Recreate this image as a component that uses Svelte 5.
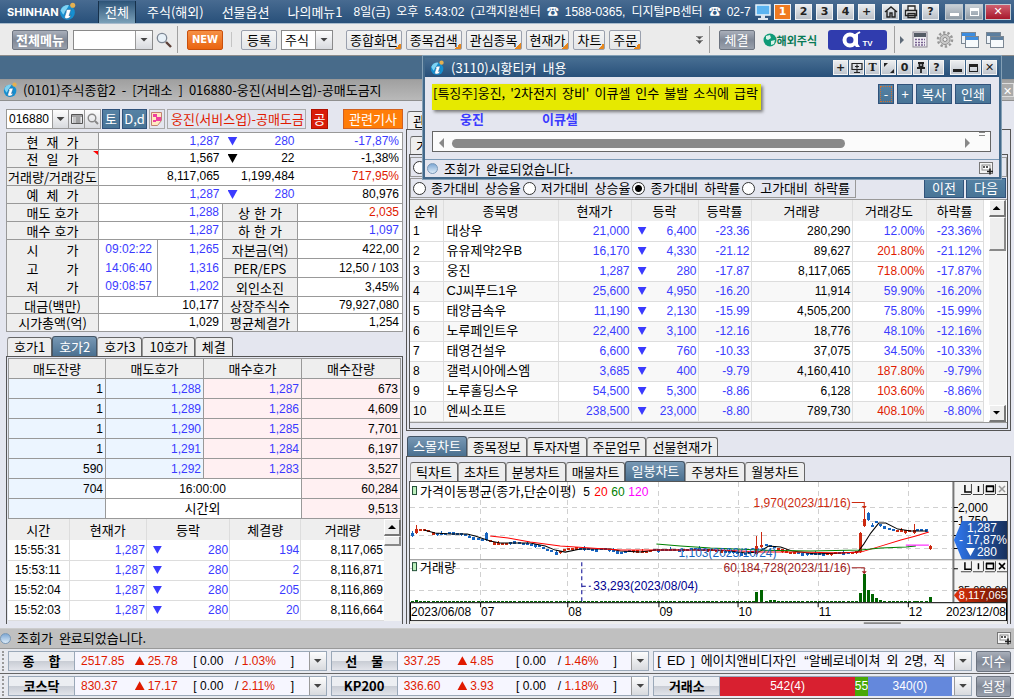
<script lang="ts">
	type Dir = 'up' | 'down' | 'none';

	const menus = ['주식(해외)', '선물옵션', '나의메뉴1'];
	const quickMenus = ['종합화면', '종목검색', '관심종목', '현재가', '차트', '주문'];
	const screens = ['1', '2', '3', '4', '+'];

	let code = $state('016880');
	let market = $state('주식');
	let search = $state('');
	let basis = $state(2);

	const basisOptions = ['종가대비 상승율', '저가대비 상승율', '종가대비 하락률', '고가대비 하락률'];

	const summary = [
		{ label: '현 재 가', value: '1,287', diff: '280', rate: '-17,87%', color: 'blue', rateColor: 'blue' },
		{ label: '전 일 가', value: '1,567', diff: '22', rate: '-1,38%', color: '', rateColor: '', mark: true },
		{ label: '거래량/거래강도', value: '8,117,065', diff: '1,199,484', rate: '717,95%', color: '', rateColor: 'red', plain: true },
		{ label: '예 체 가', value: '1,287', diff: '280', rate: '80,976', color: 'blue', rateColor: '' }
	];

	const details = [
		{ label: '매도 호가', time: '', value: '1,288', color: 'blue', label2: '상 한 가', value2: '2,035', color2: 'red' },
		{ label: '매수 호가', time: '', value: '1,287', color: 'blue', label2: '하 한 가', value2: '1,097', color2: 'blue' },
		{ label: '시 가', time: '09:02:22', value: '1,265', color: 'blue', label2: '자본금(억)', value2: '422,00', color2: '' },
		{ label: '고 가', time: '14:06:40', value: '1,316', color: 'blue', label2: 'PER/EPS', value2: '12,50 / 103', color2: '' },
		{ label: '저 가', time: '09:08:57', value: '1,202', color: 'blue', label2: '외인소진', value2: '3,45%', color2: '' },
		{ label: '대금(백만)', time: '', value: '10,177', color: '', label2: '상장주식수', value2: '79,927,080', color2: '' },
		{ label: '시가총액(억)', time: '', value: '1,029', color: '', label2: '평균체결가', value2: '1,254', color2: '' }
	];

	const quoteTabs = ['호가1', '호가2', '호가3', '10호가', '체결'];
	const quotes = [
		['1', '1,288', '1,287', '673'],
		['1', '1,289', '1,286', '4,609'],
		['1', '1,290', '1,285', '7,701'],
		['1', '1,291', '1,284', '6,197'],
		['590', '1,292', '1,283', '3,527']
	];

	const trades = [
		['15:55:31', '1,287', '280', '194', '8,117,065'],
		['15:53:11', '1,287', '280', '2', '8,116,871'],
		['15:52:04', '1,287', '280', '205', '8,116,869'],
		['15:52:03', '1,287', '280', '20', '8,116,664']
	];

	const rankHeads = ['순위', '종목명', '현재가', '등락', '등락률', '거래량', '거래강도', '하락률'];
	const ranks = [
		['대상우', '21,000', '6,400', '-23.36', '280,290', '12.00%'],
		['유유제약2우B', '16,170', '4,330', '-21.12', '89,627', '201.80%'],
		['웅진', '1,287', '280', '-17.87', '8,117,065', '718.00%'],
		['CJ씨푸드1우', '25,600', '4,950', '-16.20', '11,914', '59.90%'],
		['태양금속우', '11,190', '2,130', '-15.99', '4,505,200', '75.80%'],
		['노루페인트우', '22,400', '3,100', '-12.16', '18,776', '48.10%'],
		['태영건설우', '6,600', '760', '-10.33', '37,075', '34.50%'],
		['갤럭시아에스엠', '3,685', '400', '-9.79', '4,160,410', '187.80%'],
		['노루홀딩스우', '54,500', '5,300', '-8.86', '6,128', '103.60%'],
		['엔씨소프트', '238,500', '23,000', '-8.80', '789,730', '408.10%']
	];

	const boardTabs = ['스몰차트', '종목정보', '투자자별', '주문업무', '선물현재가'];
	const chartTabs = ['틱차트', '초차트', '분봉차트', '매물차트', '일봉차트', '주봉차트', '월봉차트'];

	const indices = [
		[
			{ name: ['종', '합'], value: '2517.85', diff: '25.78', rate: '1.03%' },
			{ name: ['선', '물'], value: '337.25', diff: '4.85', rate: '1.46%' }
		],
		[
			{ name: ['코스닥'], value: '830.37', diff: '17.17', rate: '2.11%' },
			{ name: ['KP200'], value: '336.60', diff: '3.93', rate: '1.18%' }
		]
	];

	// daily price track, x and y in chart units
	const track = [
		[2, 52], [6, 50], [11, 47], [15, 48], [22, 51], [30, 52], [42, 51], [55, 53], [65, 57], [72, 58],
		[80, 59], [88, 62], [96, 62], [105, 60], [115, 62], [130, 64], [140, 69], [148, 71], [155, 68],
		[165, 66], [175, 67], [185, 68], [193, 66], [202, 69], [210, 71], [220, 69], [235, 70], [245, 68],
		[270, 68], [287, 67], [295, 68], [320, 70], [330, 72], [340, 71], [352, 63], [362, 64], [370, 68],
		[380, 71], [400, 72], [440, 71], [446, 70], [464, 39], [468, 42], [475, 46], [485, 49], [495, 49], [505, 48], [516, 48]
	];

	// candle index: up flag, x, wick top, body top, body bottom
	const special: Record<number, number[]> = {
		1: [1, 6, 43, 47, 51],
		18: [0, 76, 50, 51, 58],
		84: [1, 345, 54, 64, 72],
		85: [1, 350, 50, 63, 65],
		109: [1, 449, 50, 51, 70],
		110: [1, 453, 27, 37, 44],
		111: [0, 457, 30, 31, 38],
		122: [1, 503, 42, 48, 51],
		126: [1, 519, 63, 64, 67]
	};

	function trackAt(x: number) {
		for (let i = 1; i < track.length; i++) {
			const [x0, y0] = track[i - 1];
			const [x1, y1] = track[i];
			if (x <= x1) return y0 + ((y1 - y0) * (x - x0)) / (x1 - x0);
		}
		return track[track.length - 1][1];
	}

	const candles = Array.from({ length: 127 }, (_, i) => {
		const x = Math.round(2 + i * 4.1);
		const s = special[i];
		if (s) return { x: s[1], top: s[2], low: s[4] + 1, y: s[3], h: s[4] - s[3], up: s[0] > 0 };
		const wave = Math.sin(i * 0.7) + Math.sin(i * 0.37);
		const y = Math.round(trackAt(x)) - 1;
		const h = 2 + (i % 5 === 0 ? 1 : 0);
		return { x, top: y - (i % 7 === 0 ? 2 : 0), low: y + h + (i % 6 === 0 ? 1 : 0), y, h, up: wave > 0.4 };
	});

	const volumes: Record<number, number> = {
		1: 2, 84: 10, 85: 12, 87: 2, 88: 2, 109: 9, 110: 28, 111: 12, 112: 8, 113: 4, 114: 2, 126: 5
	};

	const months = [
		[70, '07'], [157, '08'], [248, '09'], [327, '10'], [407, '11'], [497, '12']
	] as [number, string][];
</script>

{#snippet logo(size: number)}
	<svg width={size} height={size} viewBox="0 0 18 18" aria-hidden="true">
		<circle cx="8" cy="10" r="7" fill="#168fd0" />
		<path d="M1.5 8a7 7 0 0 1 8-5L4 12z" fill="#7fd3f3" />
		<path d="M8 7h3.500l-2 6c1 0 1.500-.5 2-1l-1 2.500c-2 1.800-6 2-5-1l1.500-4.500H6z" fill="#fff" stroke="#1a5c91" stroke-width=".5" />
		<circle cx="13" cy="3" r="2.400" fill="#e5b050" />
	</svg>
{/snippet}

{#snippet lens()}
	<svg width="16" height="16" viewBox="0 0 16 16" aria-hidden="true">
		<path d="m10 10 5 5" stroke="#5c4038" stroke-width="2.400" />
		<circle cx="6" cy="6" r="4.700" fill="#e8f1f8" stroke="#7d8794" stroke-width="1.300" />
	</svg>
{/snippet}

{#snippet tri(dir: Dir)}
	<span class="tri {dir}"></span>
{/snippet}

{#snippet panelIcon()}
	<svg width="15" height="13" viewBox="0 0 15 13" aria-hidden="true">
		<rect x=".5" y=".5" width="13" height="11" fill="#f4f4f4" stroke="#777" />
		<rect x="3" y="3" width="8" height="5" fill="#fff" stroke="#888" />
		<path d="M4 5h2m1 0h2M8 9.500h6M11 6.500v6" stroke="#222" stroke-width="1.600" />
	</svg>
{/snippet}

{#snippet scrollUp()}
	<button class="sb-btn" aria-label="위로">{@render tri('up')}</button>
{/snippet}

{#snippet winIcon(front: string)}
	<svg width="18" height="17" viewBox="0 0 18 17" aria-hidden="true">
		<rect x=".5" y="1.500" width="14" height="11" fill="#eef3f8" stroke="#7b8793" />
		<path d="M1 2h13v3H1z" fill={front} />
		<rect x="4.500" y="5.500" width="13" height="11" fill="#f7fafc" stroke="#7b8793" />
		<path d="M5 6h12v3H5z" fill={front} />
	</svg>
{/snippet}

<div class="app">
	<header class="topbar">
		<div class="brand"><b>SHINHAN</b>{@render logo(19)}</div>
		<button class="menu active">전체</button>
		{#each menus as menu}
			<button class="menu">{menu}</button>
		{/each}
		<div class="notice">
			<span>8일(금)</span><span>오후</span><span>5:43:02</span><span>(고객지원센터</span><span>☎</span>
			<span>1588-0365,</span><span>디지털PB센터</span><span>☎</span><span>02-7</span>
		</div>
		<svg class="monitor" width="18" height="18" viewBox="0 0 18 18" aria-hidden="true">
			<rect x="1" y="2" width="14" height="10" fill="#5bb4f0" stroke="#e8f4fc" stroke-width="1.500" />
			<path d="M6 12h4v3h3v2H3v-2h3z" fill="#dce6ee" />
		</svg>
		<div class="group screens">
			{#each screens as s, i}
				<button class="sq" class:orange={i === 0}>{s}</button>
			{/each}
		</div>
		<div class="group pages">
			<button class="sq" aria-label="홈">
				<svg width="14" height="14" viewBox="0 0 14 14"><path d="M1 7l6-5 6 5M3 6v6h3V8h2v4h3V6" fill="none" stroke="#222" stroke-width="1.400" /></svg>
			</button>
			<button class="sq" aria-label="인쇄하기">
				<svg width="14" height="14" viewBox="0 0 14 14"><path d="M4 5V1h7v4M1.500 5.500h11v5h-11zM4 8.500h7v4H4z" fill="#eee" stroke="#222" stroke-width="1.300" /></svg>
			</button>
			<button class="sq">?</button>
		</div>
		<div class="group">
			<button class="sys" aria-label="최소화"><i class="min"></i></button>
			<button class="sys" aria-label="복원"><i class="max"></i></button>
			<button class="sys close" aria-label="닫기">✕</button>
		</div>
	</header>

	<div class="toolbar">
		<button class="tb dark wide"><b>전체메뉴</b></button>
		<div class="combo search">
			<input aria-label="화면 검색" bind:value={search} />
			<button class="drop" aria-label="목록">{@render tri('down')}</button>
		</div>
		<button class="bare lens" aria-label="찾기">{@render lens()}</button>
		<span class="sep"></span>
		<button class="tb new"><b>NEW</b></button>
		<span class="sep faint"></span>
		<button class="tb reg">등록</button>
		<div class="combo market">
			<select aria-label="시장" bind:value={market}>
				<option>주식</option>
				<option>선물</option>
			</select>
			<span class="drop">{@render tri('down')}</span>
		</div>
		<nav class="quick">
			{#each quickMenus as q}
				<button class="tb corner">{q}</button>
			{/each}
		</nav>
		<svg class="more" width="7" height="10" viewBox="0 0 7 10" aria-hidden="true">
			<path d="M0 1.500h7M0 5.500h7" stroke="#888" />
			<path d="M1 2h5L3.500 4.500zM1 6h5L3.500 9z" fill="#555" />
		</svg>
		<span class="sep"></span>
		<button class="tb dark deal">체결</button>
		<a class="foreign" href="#foreign">
			<svg width="14" height="14" viewBox="0 0 14 14" aria-hidden="true">
				<circle cx="7" cy="7" r="6.500" fill="#109b78" />
				<path d="M3 3l4-1 1 3-3 2-2-1zM8 8l4-1-1 4-3 1z" fill="#d8f3e8" />
			</svg>
			<b>해외주식</b>
		</a>
		<a class="tv" href="#tv" aria-label="알파TV">
			<svg width="20" height="18" viewBox="0 0 20 18" aria-hidden="true">
				<circle cx="8" cy="9" r="5.500" fill="none" stroke="#fff" stroke-width="4" />
				<path d="M12 3h4v10l2 3h-4l-2-3z" fill="#fff" />
				<path d="M14 3.500 18 1" stroke="#fff" stroke-width="2" />
			</svg>
			<b>TV</b>
		</a>
		<span class="sep"></span>
		<span class="next"></span>
		<div class="tools">
			<button class="bare" aria-label="계산기">
				<svg width="18" height="17" viewBox="0 0 18 17">
					<rect x="2" y="1" width="14" height="15" fill="#f1eef4" stroke="#8b8791" />
					<path d="M3 2h12v4H3z" fill="#555c66" />
					<path d="M4 8.500h10M4 11.500h10M4 14h10" stroke="#77618f" stroke-width="1.500" stroke-dasharray="2 1" />
				</svg>
			</button>
			<button class="bare" aria-label="설정 열기">
				<svg width="18" height="17" viewBox="0 0 18 17">
					<circle cx="9" cy="8.500" r="7" fill="none" stroke="#989898" stroke-width="2.500" stroke-dasharray="2.400 2" />
					<circle cx="9" cy="8.500" r="5" fill="#c9c9c9" stroke="#8e8e8e" />
					<circle cx="9" cy="8.500" r="2" fill="#f2f2f2" stroke="#888" />
				</svg>
			</button>
			<button class="bare" aria-label="창 정렬">{@render winIcon('#3c8de0')}</button>
			<button class="bare" aria-label="창 배열">{@render winIcon('#5d7f9f')}</button>
		</div>
	</div>

	<div class="desk">
		<section class="window">
			<div class="titlebar">
				{@render logo(16)}
				<h1><span>(0101)주식종합2</span><span>-</span><span>[거래소</span><span>]</span><span>016880-웅진(서비스업)-공매도금지</span></h1>
				<button class="winx" aria-label="창 닫기">✕</button>
			</div>

			<div class="content">
				<div class="left">
					<div class="codebar">
						<div class="combo code">
							<input aria-label="종목코드" bind:value={code} />
							<button class="drop" aria-label="최근 종목">{@render tri('down')}</button>
							<button class="drop" aria-label="종목 목록">
								<svg width="12" height="12" viewBox="0 0 12 12"><path d="M.5 1.500h11v9H.5zM.5 3h11M2.500 5h1m1 0h5m-7 2h1m1 0h5m-7 2h1m1 0h5" fill="none" stroke="#555" /></svg>
							</button>
							<button class="drop" aria-label="종목 찾기">
								<svg width="12" height="12" viewBox="0 0 12 12"><circle cx="5" cy="5" r="3.800" fill="none" stroke="#888" stroke-width="1.400" /><path d="m8 8 3 3" stroke="#888" stroke-width="2" /></svg>
							</button>
						</div>
						<button class="btn blue-btn">토</button>
						<button class="btn blue-btn">D,d</button>
						<button class="btn memo" aria-label="메모">
							<svg width="12" height="14" viewBox="0 0 12 14"><path d="M.5.5h10v8l-4 5h-6z" fill="#ffe9c0" stroke="#c08070" /><path d="M2 2h4v3H2zM5 5h5v4H5zM2 8h3v2H2z" fill="#ef3fa0" /></svg>
						</button>
						<div class="name">웅진(서비스업)-공매도금</div>
						<button class="btn short">공</button>
						<button class="btn news">관련기사</button>
					</div>

					<table class="info">
						<colgroup><col style:width="92px" /><col style:width="59px" /><col style:width="65px" /><col style:width="75px" /><col style:width="105px" /></colgroup>
						<tbody>
							{#each summary as r}
								<tr>
									<th>
										<span class="spread">{#each r.plain ? [r.label] : r.label.split(' ') as w}<span>{w}</span>{/each}</span>
										{#if r.mark}<i class="mark"></i>{/if}
									</th>
									<td class="open {r.color}" colspan="2">{r.value}</td>
									<td class="open {r.color}">
										<span class="diff">{#if !r.plain}{@render tri('down')}{/if}<span>{r.diff}</span></span>
									</td>
									<td class="open {r.rateColor}">{r.rate}</td>
								</tr>
							{/each}
							{#each details as r}
								<tr class:mid={r.time}>
									<th><span class="spread">{#each r.label.split(' ') as w}<span>{w}</span>{/each}</span></th>
									{#if r.time}
										<td class="time {r.color}">{r.time}</td>
										<td class={r.color}>{r.value}</td>
									{:else}
										<td class={r.color} colspan="2">{r.value}</td>
									{/if}
									<th class="second"><span class="spread short-label">{#each r.label2.split(' ') as w}<span>{w}</span>{/each}</span></th>
									<td class={r.color2}>{r.value2}</td>
								</tr>
							{/each}
						</tbody>
					</table>

					<div class="tabs quote-tabs">
						{#each quoteTabs as t, i}
							<button class:on={i === 1}>{t}</button>
						{/each}
					</div>
					<div class="frame quote-frame">
						<table class="quote">
							<colgroup><col style:width="97px" /><col style:width="98px" /><col style:width="98px" /><col style:width="99px" /></colgroup>
							<thead>
								<tr><th>매도잔량</th><th>매도호가</th><th>매수호가</th><th>매수잔량</th></tr>
							</thead>
							<tbody>
								{#each quotes as q}
									<tr>
										<td class="ask">{q[0]}</td>
										<td class="ask blue">{q[1]}</td>
										<td class="bid blue">{q[2]}</td>
										<td class="bid">{q[3]}</td>
									</tr>
								{/each}
								<tr><td class="ask">704</td><td class="mid-cell" colspan="2">16:00:00</td><td class="bid">60,284</td></tr>
								<tr><td class="ask"></td><td class="mid-cell word" colspan="2">시간외</td><td class="bid">9,513</td></tr>
							</tbody>
						</table>
						<div class="scroller">
							<table class="grid-table trade">
								<colgroup><col style:width="61px" /><col style:width="77px" /><col style:width="83px" /><col style:width="71px" /><col style:width="83px" /></colgroup>
								<thead>
									<tr><th>시간</th><th>현재가</th><th>등락</th><th>체결량</th><th>거래량</th></tr>
								</thead>
								<tbody>
									{#each trades as t}
										<tr>
											<td class="clock">{t[0]}</td>
											<td class="blue">{t[1]}</td>
											<td class="blue"><span class="diff">{@render tri('down')}<span>{t[2]}</span></span></td>
											<td class="blue">{t[3]}</td>
											<td>{t[4]}</td>
										</tr>
									{/each}
								</tbody>
							</table>
							<div class="sb">{@render scrollUp()}<i class="thumb small"></i></div>
						</div>
					</div>
				</div>

				<div class="right">
					<div class="tabs"><button>관심종목</button></div>
					<div class="frame rank-outer">
						<div class="tabs"><button>가격등락</button></div>
						<div class="frame rank-inner">
							<div class="filters hidden-row">
								<label><input type="radio" name="target" />전체</label>
							</div>
							<div class="filter-row">
								<div class="filters">
									{#each basisOptions as b, i}
										<label>
											<input type="radio" name="basis" value={i} bind:group={basis} />
											<span class="opt">{#each b.split(' ') as w}<span>{w}</span>{/each}</span>
										</label>
									{/each}
								</div>
								<div class="pager">
									<button class="btn blue-btn">이전</button>
									<button class="btn blue-btn">다음</button>
								</div>
							</div>
							<div class="scroller rank-scroller">
								<table class="grid-table rank">
									<colgroup><col style:width="33px" /><col style:width="115px" /><col style:width="73px" /><col style:width="67px" /><col style:width="53px" /><col style:width="101px" /><col style:width="74px" /><col style:width="57px" /></colgroup>
									<thead>
										<tr>{#each rankHeads as h}<th>{h}</th>{/each}</tr>
									</thead>
									<tbody>
										{#each ranks as r, i}
											<tr>
												<td class="rank-no">{i + 1}</td>
												<td class="txt">{r[0]}</td>
												<td class="blue">{r[1]}</td>
												<td class="blue"><span class="diff">{@render tri('down')}<span>{r[2]}</span></span></td>
												<td class="blue">{r[3]}</td>
												<td>{r[4]}</td>
												<td class={parseFloat(r[5]) > 100 ? 'red' : 'blue'}>{r[5]}</td>
												<td class="blue">{r[3]}%</td>
											</tr>
										{/each}
									</tbody>
								</table>
								<div class="sb">
									{@render scrollUp()}
									<i class="thumb"></i>
									<button class="sb-btn end" aria-label="아래로">{@render tri('down')}</button>
								</div>
							</div>
						</div>
					</div>

					<div class="tabs board-tabs">
						{#each boardTabs as t, i}
							<button class:on={i === 0}>{t}</button>
						{/each}
					</div>
					<div class="frame chart-outer">
						<div class="tabs chart-tabs">
							{#each chartTabs as t, i}
								<button class:on={i === 4}>{t}</button>
							{/each}
						</div>
						<div class="frame chart-inner">
							<svg class="chart" viewBox="0 0 596 142" role="img" aria-label="웅진 일봉차트">
								<defs>
									<linearGradient id="price"><stop offset="0" stop-color="#2f78f0" /><stop offset="1" stop-color="#18305c" /></linearGradient>
									<linearGradient id="vol"><stop offset="0" stop-color="#e03008" /><stop offset="1" stop-color="#5c1404" /></linearGradient>
								</defs>
								<rect width="596" height="142" fill="#fff" />
								<rect x="543" width="53" height="120" fill="#f4f4f4" />
								<g stroke="#d0d0d0" stroke-dasharray="5 4" shape-rendering="crispEdges">
									{#each [25, 39, 53, 66, 86, 108] as y}
										<line x1="0" x2="541" y1={y + 0.5} y2={y + 0.5} />
									{/each}
									{#each months as [x]}
										<line x1={x + 0.5} x2={x + 0.5} y1="0" y2="120" />
									{/each}
								</g>
								<g shape-rendering="crispEdges">
									{#each candles as c, i}
										<rect x={c.x} y={c.top} width="1" height={c.low - c.top} fill={c.up ? '#cc2a10' : '#1664c0'} />
										<rect x={c.x - 1} y={c.y} width="3" height={c.h} fill={c.up ? '#cc2a10' : '#1664c0'} />
										<rect x={c.x - 1} y={120 - (volumes[i] ?? 1)} width="3" height={volumes[i] ?? 1} fill="#006400" />
									{/each}
								</g>
								<g fill="none" stroke-width="1">
									<polyline stroke="#000" points="14,48 25,51 40,52 57,52 65,54 80,59 90,61 105,61 120,61 135,64 145,68 155,70 170,67 185,67 200,67 210,69 230,70 245,68 280,68 300,68 320,69 335,71 348,70 358,64 370,65 382,69 405,72 430,71 447,70 453,62 460,51 468,41 475,41 487,47 500,49 516,49" />
									<polyline stroke="#f00" points="80,54 98,56 120,60 150,64 180,66 210,68 270,68 310,68 350,70 390,70 430,71 450,70 470,64 490,58 505,54 518,50" />
									<polyline stroke="#008000" points="246,62 270,64 300,66 350,68 400,69 450,68 470,66 495,65 505,64" />
									<polyline stroke="#f0f" points="495,63 518,63" />
									<path d="M441 20.500h12.500v4" stroke="#cc2a10" />
									<path d="M441 85.500h12.500v4" stroke="#a02020" />
									<path d="M171.500 80v40m0-16h9" stroke="#000090" stroke-dasharray="4 3" />
								</g>
								<path d="M451 24h5l-2.500 3z" fill="#cc2a10" />
								<path d="M451 89h5l-2.500 3z" fill="#a02020" />

								<g stroke="#24523a" fill="#bdf0bd">
									<rect x="2.500" y="4.500" width="4" height="8" />
									<rect x="2.500" y="80.500" width="4" height="8" />
								</g>
								<text class="ko" x="10" y="14">가격이동평균(종가,단순이평)</text>
								<text x="173" y="14">5</text>
								<text x="184" y="14" fill="#f00">20</text>
								<text x="201" y="14" fill="#008000">60</text>
								<text x="218" y="14" fill="#f0f">120</text>
								<text class="ko" x="10" y="90">거래량</text>
								<text x="440" y="25" text-anchor="end" fill="#cc2a10">1,970(2023/11/16)</text>
								<text x="440" y="90" text-anchor="end" fill="#a02020">60,184,728(2023/11/16)</text>
								<text x="268" y="75" fill="#1664c0">1,103(2023/10/24)</text>
								<text x="183" y="108" fill="#000090">33,293(2023/08/04)</text>

								<path d="M0 77.500h596" stroke="#888" />
								<path d="M542.500 0v120" stroke="#777" stroke-width="2" />
								<path d="M543 25.500h4m-4 14h4m-4 14h4m-4 13h4m-4 20h4m-4 22h4" stroke="#000" />
								<text x="547" y="30">2,000</text>
								<text x="547" y="43">1,750</text>
								<text class="small" x="547" y="112">25,000,00</text>
								<path d="M543 58l8-19h45v38h-45z" fill="url(#price)" />
								<g fill="#fff" text-anchor="end">
									<text x="586" y="50">1,287</text>
									<text x="596" y="62">- 17,87%</text>
									<text x="586" y="74">280</text>
								</g>
								<path d="M555 66h9l-4.500 8z" fill="#fff" />
								<path d="M543 113l6-7h47v14h-47z" fill="url(#vol)" />
								<text class="small" x="596" y="117" text-anchor="end" fill="#fff">8,117,065</text>
								{#each [2, 79] as y}
									<g stroke="#000" fill="none" transform="translate(550 {y})">
										<path d="M4 1v7h7M17.500 2v6M25.500 2.500h7v5h-7zM25 2h8" stroke-width="1.500" />
										<path d="M38 2l6 6m0-6l-6 6" stroke={y === 2 ? '#999' : '#000'} stroke-width="1.500" />
										<path d="M0 10.500h10m2 0h10m2 0h10m2 0h10M10.500 0v10m12-10v10m12-10v10" stroke="#444" />
									</g>
								{/each}
								<rect x=".5" y="120.500" width="595" height="18" fill="#fff" stroke="#000" />
								<text x="1" y="134">2023/06/08</text>
								{#each months as [x, m]}
									<path d="M{x + 0.5} 120v5" stroke="#000" />
									<text x={x + 1} y="134">{m}</text>
								{/each}
								<text x="595" y="134" text-anchor="end">2023/12/08</text>
								<rect y="139" width="596" height="3" fill="#eee" />
								<rect x="453" y="140" width="37" height="2" fill="#888" />
							</svg>
						</div>
					</div>
				</div>
			</div>

			<footer class="status gray">
				<i class="dot"></i><span>조회가</span><span>완료되었습니다.</span>
				<button class="bare push" aria-label="화면 추가">{@render panelIcon()}</button>
			</footer>
		</section>

		<section class="popup">
			<div class="popup-title">
				{@render logo(16)}
				<h2><span>(3110)시황티커</span><span>내용</span></h2>
				<div class="popup-btns">
					<button aria-label="추가">+</button>
					<button aria-label="모니터">
						<svg width="12" height="12" viewBox="0 0 12 12"><path d="M1 1.500h10v6H1zM6 8v3M3 10.500h6M6 2.500v4M4 4.500h4" fill="none" stroke="#222" stroke-width="1.200" /></svg>
					</button>
					<button class="serif">T</button>
					<button aria-label="크기">
						<svg width="12" height="12" viewBox="0 0 12 12"><path d="M1 1h4L1 5zM11 11H7l4-4z" fill="#222" /></svg>
					</button>
					<button>0</button>
					<button aria-label="고정">
						<svg width="12" height="12" viewBox="0 0 12 12"><path d="M3 1h6M4.500 1v4h3V1M2 6h8M6 6v5" fill="none" stroke="#222" stroke-width="1.800" /></svg>
					</button>
					<button>?</button>
				</div>
				<div class="popup-btns">
					<button aria-label="내리기"><i class="min"></i></button>
					<button aria-label="최대화"><i class="max"></i></button>
					<button aria-label="팝업 닫기">✕</button>
				</div>
			</div>
			<div class="popup-body">
				<div class="headline-row">
					<p class="headline"><span>[특징주]웅진,</span><span>'2차전지</span><span>장비'</span><span>이큐셀</span><span>인수</span><span>불발</span><span>소식에</span><span>급락</span></p>
					<div class="popup-actions">
						<button class="btn blue-btn focus">-</button>
						<button class="btn blue-btn">+</button>
						<button class="btn blue-btn word">복사</button>
						<button class="btn blue-btn word">인쇄</button>
					</div>
				</div>
				<div class="related"><a href="#016880">웅진</a><a href="#equcell">이큐셀</a></div>
				<div class="hscroll">
					<i class="arrow back"></i><i class="bar"></i><i class="arrow"></i>
					<i class="grip"></i>
				</div>
			</div>
			<div class="status">
				<i class="dot"></i><span>조회가</span><span>완료되었습니다.</span>
				<button class="bare push" aria-label="창 추가">{@render panelIcon()}</button>
			</div>
		</section>
	</div>

	<div class="tickers">
		{#each indices as row, n}
			<div class="ticker-row">
				<span class="handle"></span>
				{#each row as t}
					<div class="ticker">
						<b class="label">{#each t.name as w}<span>{w}</span>{/each}</b>
						<div class="figures red">
							<span>{t.value}</span>
							<span class="rise">{@render tri('up')}{t.diff}</span>
							<span class="black">[ 0.00</span>
							<span><span class="black">/</span> {t.rate}</span>
							<span class="black">]</span>
						</div>
						<button class="drop" aria-label="{t.name.join('')} 선택">{@render tri('down')}</button>
					</div>
				{/each}
				<div class="ticker">
					{#if n === 0}
						<div class="headline-ticker"><span>[</span><span>ED</span><span>]</span><span>에이치앤비디자인</span><span class="quoted">“알베로네이쳐</span><span>외</span><span>2명,</span><span>직</span></div>
					{:else}
						<b class="label">거래소</b>
						<div class="breadth"><span class="adv">542(4)</span><span class="flat">55</span><span class="dec">340(0)</span></div>
					{/if}
					<button class="drop" aria-label="목록 열기">{@render tri('down')}</button>
				</div>
				<button class="tb dark side">{n === 0 ? '지수' : '설정'}</button>
			</div>
		{/each}
	</div>
</div>

<style>
	:global(body) {
		margin: 0;
		background: #e4e6ef;
	}

	* {
		box-sizing: border-box;
	}

	.app {
		color: #000;
		font-family: 'Noto Sans CJK KR', sans-serif;
		font-size: 13px;
		line-height: 16px;
		white-space: nowrap;
	}

	button,
	input,
	select {
		margin: 0;
		padding: 0;
		border: 0;
		border-radius: 0;
		background: none;
		color: inherit;
		font: inherit;
	}

	h1,
	h2,
	p {
		display: flex;
		gap: 6px;
		margin: 0;
		font-size: 13px;
		font-weight: normal;
	}

	a {
		color: inherit;
		text-decoration: none;
	}

	svg {
		flex: none;
	}

	.blue {
		color: #3b3bff;
	}

	.red {
		color: #e01a00;
	}

	.black {
		color: #000;
	}

	/* triangles */
	.tri {
		flex: none;
		width: 10px;
		height: 9px;
		background: currentColor;
		clip-path: polygon(0 0, 100% 0, 50% 100%);
	}

	.tri.up {
		clip-path: polygon(50% 0, 100% 100%, 0 100%);
	}

	.drop,
	.sb-btn {
		display: flex;
		align-items: center;
		justify-content: center;
	}

	.drop .tri,
	.sb-btn .tri {
		width: 8px;
		height: 4px;
	}

	.drop {
		width: 17px;
		border-left: 1px solid #9a9a9a;
		background: linear-gradient(#fdfdfd, #d8dade);
		color: #444;
	}

	.bare {
		display: flex;
		align-items: center;
		justify-content: center;
	}

	/* top bar */
	.topbar {
		display: flex;
		align-items: center;
		height: 24px;
		padding: 0 3px 0 7px;
		border-bottom: 1px solid #a9bccd;
		background: linear-gradient(#486b91, #28507a);
		color: #fff;
	}

	.brand {
		display: flex;
		align-items: center;
		width: 91px;
		font-family: Inter, 'Liberation Sans', sans-serif;
		font-size: 11px;
	}

	.menu {
		margin-right: 18px;
	}

	.menu.active {
		width: 38px;
		height: 22px;
		margin-right: 11px;
		border-right: 1px solid #16304a;
		border-left: 1px solid #16304a;
		background: linear-gradient(#2d5478, #7ba0b8);
	}

	.notice {
		display: flex;
		flex: 1;
		gap: 6px;
		min-width: 0;
		margin-left: -7px;
		font-family: 'Liberation Sans', 'Noto Sans CJK KR', sans-serif;
		font-size: 12px;
	}

	.monitor {
		margin-right: 1px;
	}

	.group {
		display: flex;
		gap: 2px;
	}

	.screens {
		gap: 4px;
		margin-right: 7px;
	}

	.pages {
		gap: 3px;
		margin-right: 6px;
	}

	.sq,
	.sys {
		display: flex;
		align-items: center;
		justify-content: center;
		width: 17px;
		height: 16px;
		border: 1px solid #eef1f4;
		background: linear-gradient(#e8ebee, #b9c0c8);
		color: #222;
		font-family: 'DejaVu Sans', sans-serif;
		font-size: 11px;
		font-weight: bold;
	}

	.sq.orange {
		background: #f07a20;
		color: #fff;
	}

	.sys {
		width: 18px;
		border-color: #c0cad2;
		background: linear-gradient(#c9d0d6, #8f9ba6);
		color: #fff;
	}

	.sys.close {
		width: 26px;
		background: linear-gradient(#cf6070, #a8182c);
	}

	.min {
		width: 9px;
		height: 3px;
		margin-top: 5px;
		background: currentColor;
	}

	.max {
		width: 9px;
		height: 8px;
		border: 1px solid currentColor;
		border-top-width: 3px;
	}

	/* tool bar */
	.toolbar {
		display: flex;
		align-items: center;
		height: 32px;
		padding: 0 10px 0 12px;
		border-bottom: 1px solid #8c8c8c;
		background: #ebebeb;
	}

	.tb {
		height: 20px;
		padding: 0 3px;
		border: 1px solid #9aa0ad;
		border-radius: 2px;
		background: linear-gradient(#f5f5f5, #e3e5e8);
		line-height: 18px;
	}

	.tb.dark {
		border-color: #6d7480;
		background: linear-gradient(#a9afba, #808896 50%, #9aa1ad);
		color: #fff;
	}

	.tb.wide {
		width: 56px;
	}

	.tb.new {
		width: 36px;
		border-color: #c9500c;
		background: linear-gradient(#f59045, #ea6410);
		color: #fff;
		font-family: 'DejaVu Sans', sans-serif;
		font-size: 10px;
	}

	.tb.reg,
	.tb.deal {
		width: 36px;
	}

	.tb.corner {
		background:
			linear-gradient(135deg, transparent 50%, #e8871c 50%) right bottom / 6px 6px no-repeat,
			linear-gradient(#f5f5f5, #e3e5e8);
	}

	.combo {
		display: flex;
		height: 20px;
		border: 1px solid #8a8a8a;
		background: #fff;
	}

	.combo input,
	.combo select {
		flex: 1;
		min-width: 0;
		padding: 0 3px;
		appearance: none;
		outline: none;
	}

	.search {
		width: 80px;
		margin-left: 5px;
	}

	.market {
		width: 52px;
		margin-left: 4px;
	}

	.lens {
		margin: 0 5px 0 3px;
	}

	.sep {
		align-self: stretch;
		width: 1px;
		margin: 2px 9px 2px 0;
		background: #a0a0a0;
	}

	.sep.faint {
		margin: 8px 9px 8px 8px;
		background: #c4c4c4;
	}

	.quick {
		display: flex;
		flex: 1;
		gap: 4px;
		margin-left: 13px;
	}

	.more {
		margin-right: 6px;
	}

	.foreign {
		display: flex;
		align-items: center;
		margin-left: 8px;
		color: #087a55;
		font-size: 11px;
	}

	.tv {
		display: flex;
		align-items: center;
		justify-content: center;
		width: 59px;
		height: 20px;
		margin: 0 7px 0 11px;
		border-radius: 3px;
		background: #303cae;
		color: #fff;
		font-family: 'Liberation Sans', sans-serif;
		font-size: 8px;
	}

	.tv b {
		align-self: flex-end;
		line-height: 12px;
	}

	.next {
		margin: 0 7px 0 -4px;
		border: 4px solid transparent;
		border-right: 0;
		border-left-color: #5e6a78;
	}

	.tools {
		display: flex;
		gap: 7px;
	}

	/* main window */
	.desk {
		position: relative;
		padding-top: 23px;
		background: #486b8a;
	}

	.window {
		background: #e4e6ef;
	}

	.titlebar {
		display: flex;
		align-items: center;
		gap: 4px;
		height: 22px;
		padding: 0 0 0 3px;
		border-top: 1px solid #999;
		border-bottom: 1px solid #8f8f8f;
		background: linear-gradient(#a0a0a0, #b9b9b9);
	}

	.winx {
		width: 13px;
		height: 14px;
		margin-left: auto;
		border: 1px solid #ddd;
		background: #aaa;
		color: #fff;
		font-size: 11px;
		line-height: 12px;
	}

	.content {
		display: grid;
		grid-template-columns: minmax(0, 397fr) minmax(0, 605fr);
		column-gap: 3px;
		padding: 0 3px 4px 6px;
	}

	.left,
	.right {
		display: flex;
		flex-direction: column;
	}

	.codebar {
		display: flex;
		align-items: stretch;
		height: 20px;
		margin: 8px 0 3px;
	}

	.codebar .combo {
		border-color: #999;
	}

	.code {
		width: 95px;
	}

	.code input {
		padding: 0 2px;
		font-family: 'Liberation Sans', sans-serif;
		font-size: 12px;
	}

	.code .drop {
		width: 16px;
	}

	.btn {
		display: flex;
		align-items: center;
		justify-content: center;
		border: 1px solid;
	}

	.blue-btn {
		border-color: #30527a;
		background: linear-gradient(#5682a4, #487496);
		color: #fff;
	}

	.codebar .blue-btn {
		width: 18px;
		margin-left: 1px;
	}

	.codebar .blue-btn + .blue-btn {
		width: 25px;
		margin-left: 2px;
	}

	.memo {
		width: 16px;
		margin: 0 2px;
		border-color: #aaa;
	}

	.name {
		flex: 1;
		min-width: 0;
		padding: 1px 3px;
		overflow: hidden;
		border: 1px solid #aaa;
		color: #e01a00;
	}

	.short {
		width: 17px;
		margin: 0 15px 0 5px;
		border-color: #b01000;
		background: #d81c08;
		color: #fff;
	}

	.news {
		width: 60px;
		border-color: #d06020;
		background: #ff7d08;
		color: #fff;
	}

	table {
		width: 100%;
		table-layout: fixed;
		border-collapse: collapse;
	}

	th,
	td {
		padding: 0;
		font-weight: normal;
	}

	td {
		font-family: 'Liberation Sans', 'Noto Sans CJK KR', sans-serif;
		font-size: 12px;
		text-align: right;
	}

	td.txt,
	td.word {
		font-size: 13px;
	}

	th {
		background: #eee;
	}

	.info th,
	.info td {
		height: 18px;
		border: 1px solid #999;
		line-height: 15px;
	}

	.info tr:first-child th,
	.info tr:first-child td,
	.info tr:nth-child(10) th,
	.info tr:nth-child(10) td {
		height: 17px;
	}

	.info td {
		padding-right: 3px;
		background: #fff;
	}

	.info td.open {
		border-right: 0;
		border-left: 0;
	}

	.info td.open:last-child {
		border-right: 1px solid #999;
	}

	.info th {
		position: relative;
	}

	.info .mid th,
	.info .mid td {
		height: 19px;
	}

	.info .mid + .mid th:first-child,
	.info .mid + .mid td:not(:last-child) {
		border-top: 0;
	}

	.info .mid:has(+ .mid) th:first-child,
	.info .mid:has(+ .mid) td:not(:last-child) {
		border-bottom: 0;
	}

	.info td.time {
		padding-right: 5px;
	}

	.spread {
		display: flex;
		justify-content: space-between;
		width: 52px;
		margin: 0 auto;
	}

	.spread.short-label {
		width: 44px;
	}

	.spread > :only-child {
		margin: 0 -30px;
		flex: 1;
		text-align: center;
	}

	.mark {
		position: absolute;
		top: 1px;
		right: 0;
		width: 5px;
		height: 4px;
		background: #f00;
		clip-path: polygon(0 0, 100% 0, 100% 100%);
	}

	.diff {
		display: flex;
		align-items: center;
	}

	.diff .tri {
		margin-left: 5px;
	}

	.diff > :last-child {
		margin-left: auto;
	}

	.grid-table .diff .tri {
		margin-left: 6px;
		width: 9px;
		height: 8px;
	}

	/* tabs */
	.tabs {
		display: flex;
		align-items: flex-end;
		height: 20px;
		margin-top: 4px;
		padding-left: 1px;
	}

	.tabs button {
		height: 19px;
		padding: 0 5px;
		border: 1px solid #666;
		border-bottom: 0;
		border-left-color: #999;
		border-radius: 3px 3px 0 0;
		background: #eee;
	}

	.tabs button.on {
		height: 20px;
		border-color: #456;
		background: linear-gradient(#7898b4, #4a7090);
		color: #fff;
	}

	.quote-tabs button {
		padding: 0 6px;
	}

	.frame {
		border: 1px solid #555;
	}

	.quote-frame {
		flex: 1;
		padding: 1px 1px 0;
		border-bottom: 0;
	}

	.quote th,
	.quote td {
		height: 20px;
		border: 1px solid #999;
	}

	.quote td {
		padding-right: 2px;
	}

	.quote .ask {
		background: #ecf5ff;
	}

	.quote .bid {
		background: #fff0f2;
	}

	.quote .mid-cell {
		background: #fff;
		text-align: center;
	}

	.scroller {
		display: flex;
		background: #fff;
	}

	.grid-table th {
		height: 21px;
	}

	.grid-table th,
	.grid-table td {
		border-right: 1px solid #ddd;
	}

	.grid-table td {
		height: 20px;
		padding-right: 1px;
		border-bottom: 1px solid #ddd;
	}

	.grid-table td.clock {
		padding-right: 8px;
	}

	.grid-table td.txt,
	.grid-table td.rank-no {
		padding-left: 3px;
		text-align: left;
	}

	.trade td:last-child,
	.trade th:last-child {
		border-right: 0;
	}

	.sb {
		display: flex;
		flex: none;
		flex-direction: column;
		width: 17px;
		background: #f3f3f3;
	}

	.sb-btn {
		width: 17px;
		height: 17px;
		border: 1px solid #fff;
		border-right: 2px solid #777;
		border-bottom: 2px solid #777;
		background: #eee;
	}

	.sb-btn.end {
		margin-top: auto;
	}

	.thumb {
		height: 34px;
		border: 1px solid #fff;
		border-right: 2px solid #888;
		border-bottom: 2px solid #888;
		background: #eee;
	}

	.thumb.small {
		height: 10px;
	}

	/* right column */
	.right > .tabs:first-child {
		height: 18px;
		margin-top: 10px;
	}

	.right > .tabs:first-child button,
	.rank-outer > .tabs button {
		height: 18px;
	}

	.rank-outer {
		padding: 0 2px 1px;
	}

	.rank-outer > .tabs {
		height: 18px;
		margin-top: 6px;
	}

	.filters {
		display: flex;
		align-items: center;
		gap: 2px;
		height: 20px;
		padding: 0 5px 0 2px;
		border: 1px solid #999;
	}

	.hidden-row {
		margin-top: 2px;
	}

	.filters label {
		display: flex;
		align-items: center;
		gap: 5px;
	}

	.filters input {
		width: 13px;
		height: 13px;
		appearance: none;
		border: 1px solid #333;
		border-radius: 50%;
		background: #fff;
	}

	.filters input:checked {
		background: radial-gradient(#000 0 3px, #fff 4px);
	}

	.opt {
		display: flex;
		gap: 6px;
	}

	.filter-row {
		display: flex;
		justify-content: space-between;
		margin: 1px 1px 1px 0;
	}

	.pager {
		display: flex;
		gap: 2px;
	}

	.pager .btn {
		width: 40px;
	}

	.rank-scroller {
		padding-right: 2px;
		border-top: 1px solid #999;
		border-bottom: 1px solid #999;
	}

	.rank-scroller .sb {
		margin-left: 5px;
	}

	.rank-inner {
		padding-bottom: 5px;
	}

	.rank tbody tr:nth-child(2n + 4) {
		background: #f8f8f8;
	}

	.board-tabs {
		margin-top: 5px;
	}

	.board-tabs button,
	.chart-tabs button {
		padding: 0 5px;
	}

	.chart-outer {
		flex: 1;
		padding: 0 2px;
		border-bottom: 0;
	}

	.chart-inner {
		border-bottom: 0;
	}

	.chart {
		display: block;
		width: 100%;
		font-family: 'Liberation Sans', 'Noto Sans CJK KR', sans-serif;
		font-size: 12px;
	}

	.chart .ko {
		font-family: 'Noto Sans CJK KR', sans-serif;
		font-size: 13px;
	}

	.chart .small {
		font-size: 11px;
	}

	/* status lines */
	.status {
		display: flex;
		align-items: center;
		gap: 6px;
		height: 18px;
		padding: 0 5px 0 2px;
		border-top: 1px solid #7a98b4;
	}

	.status.gray {
		height: 21px;
		padding-left: 0;
		padding-right: 2px;
		border-top: 1px solid #ccc;
		border-bottom: 1px solid #999;
		background: #c0c0c0;
	}

	.push {
		margin-left: auto;
	}

	.dot {
		width: 11px;
		height: 11px;
		border: 1px solid #7898b8;
		border-radius: 50%;
		background: linear-gradient(#7ea8d4, #dcebf8);
	}

	/* news popup */
	.popup {
		position: absolute;
		top: -1px;
		right: 12px;
		left: 422px;
		border: 3px solid #42698b;
		outline: 1px solid #84a0b6;
		outline-offset: -1px;
		background: #e4e6ef;
	}

	.popup-title {
		display: flex;
		align-items: center;
		gap: 5px;
		height: 19px;
		padding: 0 2px 0 5px;
		background: linear-gradient(#476e92, #28507a);
		color: #fff;
	}

	.popup-btns {
		display: flex;
		gap: 1px;
		margin-left: auto;
	}

	.popup-btns + .popup-btns {
		margin-left: 1px;
	}

	.popup-btns button {
		display: flex;
		align-items: center;
		justify-content: center;
		width: 15px;
		height: 15px;
		border: 1px solid #f4f4f4;
		background: linear-gradient(#eceef0, #c0c6ce);
		color: #222;
		font-family: 'DejaVu Sans', sans-serif;
		font-size: 11px;
		font-weight: bold;
	}

	.popup-btns .serif {
		font-family: 'DejaVu Serif', serif;
	}

	.popup-body {
		padding: 7px 8px 7px 7px;
	}

	.headline-row {
		display: flex;
		justify-content: space-between;
	}

	.headline {
		gap: 5px;
		width: 329px;
		height: 26px;
		padding: 1px 0 0 1px;
		background: #e6e900;
		box-shadow: 2px 2px 3px #777;
	}

	.popup-actions {
		display: flex;
		gap: 3px;
		height: 20px;
	}

	.popup-actions .btn {
		width: 16px;
	}

	.popup-actions .word {
		width: 36px;
	}

	.focus {
		outline: 1px dotted #d07030;
		outline-offset: -3px;
	}

	.related {
		display: flex;
		gap: 58px;
		height: 21px;
		padding: 1px 0 0 28px;
		color: #3b3bff;
		font-weight: bold;
	}

	.hscroll {
		position: relative;
		display: flex;
		align-items: center;
		gap: 8px;
		height: 21px;
		padding: 3px 20px 0 6px;
		border: 1px solid #666;
		background: #fbfbfb;
	}

	.arrow {
		margin-left: auto;
		border: 5px solid transparent;
		border-right: 0;
		border-left-color: #888;
	}

	.arrow.back {
		margin: 0;
		border-right: 5px solid #888;
		border-left: 0;
	}

	.bar {
		width: 74%;
		height: 9px;
		border-radius: 5px;
		background: #8a8a8a;
	}

	.grip {
		position: absolute;
		top: 0;
		right: 5px;
		width: 6px;
		height: 4px;
		border: 1px solid #888;
		border-width: 1px 0;
	}

	/* index tickers */
	.tickers {
		background: #e8eaf0;
	}

	.ticker-row {
		display: flex;
		gap: 4px;
		height: 25px;
		padding: 2px 3px 2px 0;
		border-bottom: 1px solid #666;
	}

	.handle {
		width: 4px;
		border-right: 2px dotted #999;
	}

	.ticker {
		display: flex;
		flex: 1;
		min-width: 0;
		border: 1px solid #9aa8b8;
		background: #f6f6ff;
	}

	.label {
		display: flex;
		gap: 14px;
		align-items: center;
		justify-content: center;
		flex: none;
		width: 66px;
		border-right: 1px solid #9aa8b8;
		background: linear-gradient(#eceef2 50%, #c8ccd4 50%, #e2e4ea);
	}

	.figures {
		display: grid;
		flex: 1;
		grid-template-columns: 54fr 59fr 42fr 56fr 18fr;
		align-items: center;
		padding-left: 6px;
		font-family: 'Liberation Sans', sans-serif;
		font-size: 12px;
	}

	.rise {
		display: flex;
		align-items: center;
		gap: 3px;
	}

	.headline-ticker {
		display: flex;
		flex: 1;
		gap: 6px;
		align-items: center;
		min-width: 0;
		padding-left: 3px;
		font-family: 'Liberation Sans', 'Noto Sans CJK KR', sans-serif;
	}

	.quoted {
		margin-left: 2px;
	}

	.breadth {
		display: grid;
		flex: 1;
		grid-template-columns: minmax(0, 134fr) minmax(0, 13fr) minmax(0, 84fr);
		padding-right: 2px;
		color: #fff;
		font-family: 'Liberation Sans', sans-serif;
		font-size: 12px;
		line-height: 19px;
		text-align: center;
	}

	.adv {
		background: #d82030;
	}

	.flat {
		background: #48a808;
	}

	.dec {
		background: #6488dc;
	}

	.tb.side {
		width: 35px;
		height: 21px;
	}
</style>
